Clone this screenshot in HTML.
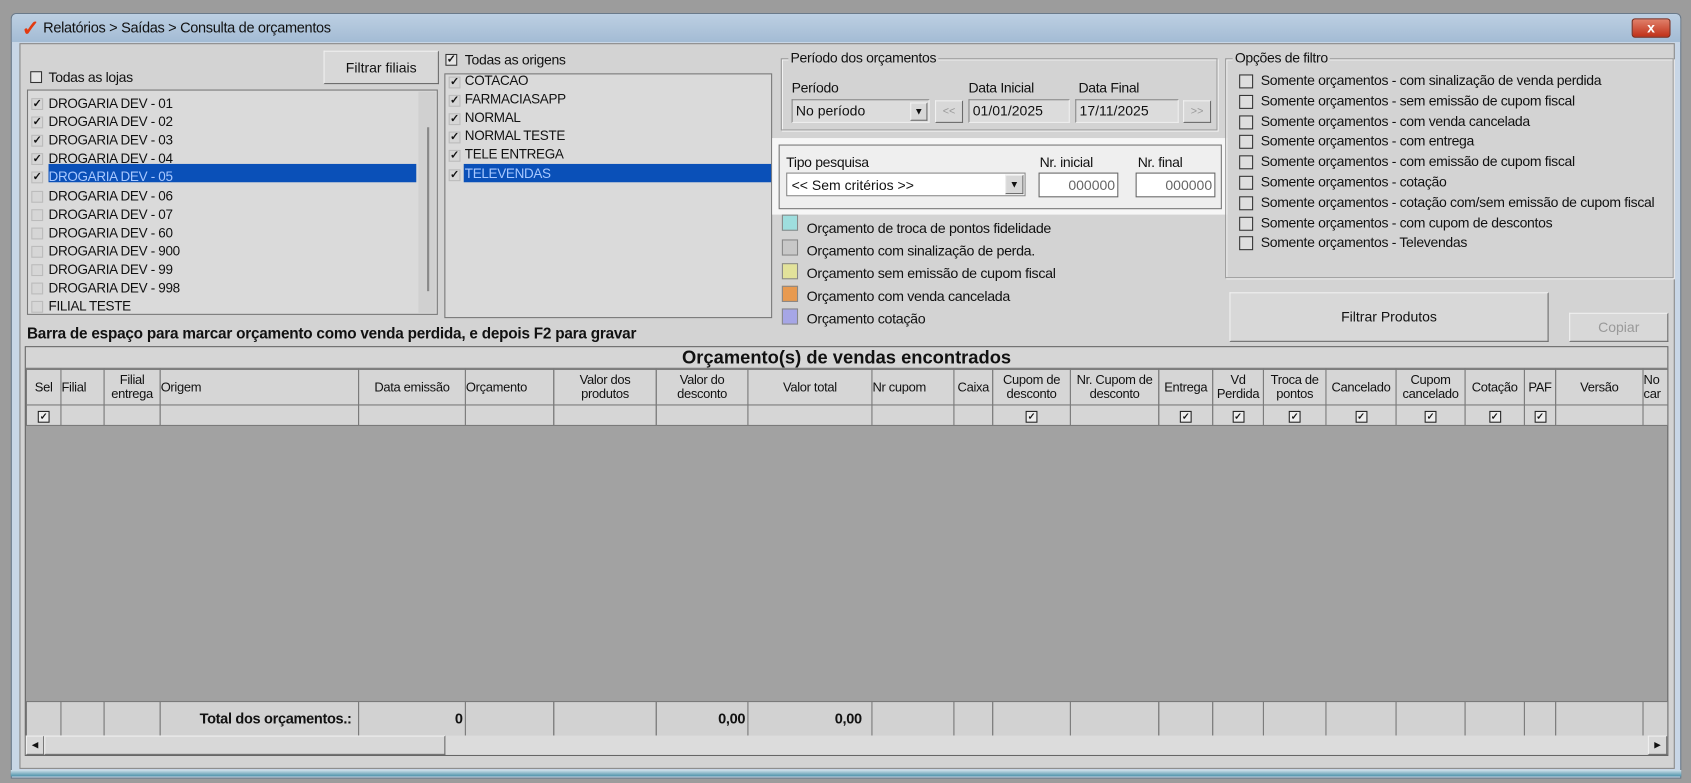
<!DOCTYPE html>
<html><head><meta charset="utf-8"><style>
*{box-sizing:border-box;margin:0;padding:0}
html,body{width:1691px;height:783px;overflow:hidden;background:#9c9c9c;font-family:"Liberation Sans",sans-serif;font-size:13px;color:#111}
#w{position:absolute;left:0;top:0;width:1568px;height:726px;transform:scale(1.07844);transform-origin:0 0}
.a{position:absolute}
.t{position:absolute;white-space:nowrap;letter-spacing:-0.3px}
.cb{position:absolute;width:11px;height:11px;border:1px solid #333;background:#e6e6e6;font-size:10px;line-height:9px;text-align:center;font-weight:bold}
.lc{position:absolute;width:11px;height:11px;border:1px solid #bbb;background:#d6d6d6;font-size:10px;line-height:9px;text-align:center;font-weight:bold;color:#111}
.grp{position:absolute;border:1px solid #9a9a9a;box-shadow:inset 1px 1px 0 #f4f4f4,1px 1px 0 #f4f4f4}
.btn{position:absolute;background:#d8d8d8;border:1px solid #f0f0f0;border-right-color:#6a6a6a;border-bottom-color:#6a6a6a;text-align:center}
.fld{position:absolute;background:#dcdcdc;border:1px solid #888;border-right-color:#eee;border-bottom-color:#eee;padding:2px 3px}
table{border-collapse:collapse;table-layout:fixed}
td{border:1px solid #7a7a7a;font-size:12px;text-align:center;letter-spacing:-0.3px;line-height:13px;overflow:hidden;white-space:nowrap}
.ck{display:inline-block;width:11px;height:11px;border:1px solid #222;background:#eee;font-size:9px;line-height:9px;font-weight:bold}
.lg{font-size:13.2px}
</style></head><body><div id="w">
<div class="a" style="left:10px;top:12px;width:1549px;height:710px;background:#c8d6e6;border:1px solid #6a7a8a;border-radius:5px 5px 0 0"></div>
<div class="a" style="left:11px;top:13px;width:1547px;height:26px;background:linear-gradient(#bccfe2,#a3bbd4);border-radius:5px 5px 0 0"></div>
<div class="t" style="left:20px;top:14px;color:#e23a10;font-size:20px;font-weight:bold">✓</div>
<div class="t" style="left:40px;top:18px;font-size:13.5px">Relatórios &gt; Saídas &gt; Consulta de orçamentos</div>
<div class="a" style="left:1513px;top:17px;width:36px;height:18px;background:linear-gradient(#e0806a,#c03018);border:1px solid #7a2a1a;border-radius:3px;color:#fff;font-weight:bold;text-align:center;line-height:15px">x</div>
<div class="a" style="left:18px;top:40px;width:1535px;height:673px;background:#d3d3d3;border:1px solid #888"></div>
<div class="a" style="left:10px;top:714px;width:1549px;height:6px;background:linear-gradient(#cfe0ea,#4a90a8)"></div>

<div class="cb" style="left:28px;top:66px"></div><div class="t" style="left:45px;top:64px">Todas as lojas</div>
<div class="btn" style="left:300px;top:47px;width:107px;height:31px;line-height:29px">Filtrar filiais</div>
<div class="a" style="left:25px;top:83px;width:381px;height:209px;background:#dadada;border:1px solid #777"></div>
<div class="a" style="left:388px;top:85px;width:16px;height:205px;background:#d0d0d0"></div>
<div class="a" style="left:396px;top:118px;width:2px;height:152px;background:#888"></div>
<div class="a" style="left:45px;top:152px;width:341px;height:17px;background:#0a50b8"></div>

<div class="cb" style="left:413px;top:50px">✓</div><div class="t" style="left:431px;top:48px">Todas as origens</div>
<div class="a" style="left:412px;top:68px;width:304px;height:227px;background:#dadada;border:1px solid #777"></div>
<div class="a" style="left:430px;top:152px;width:285px;height:17px;background:#0a50b8"></div>

<div class="grp" style="left:724px;top:54px;width:405px;height:67px"></div>
<div class="t" style="left:731px;top:46px;background:#d3d3d3;padding:0 2px">Período dos orçamentos</div>
<div class="t" style="left:734px;top:74px">Período</div>
<div class="t" style="left:898px;top:74px">Data Inicial</div>
<div class="t" style="left:1000px;top:74px">Data Final</div>
<div class="fld" style="left:734px;top:92px;width:128px;height:22px">No período</div>
<div class="btn" style="left:844px;top:95px;width:16px;height:17px;font-size:9px;line-height:15px">▼</div>
<div class="btn" style="left:867px;top:93px;width:26px;height:21px;color:#999;font-size:10px;line-height:19px">&lt;&lt;</div>
<div class="fld" style="left:898px;top:92px;width:94px;height:22px">01/01/2025</div>
<div class="fld" style="left:997px;top:92px;width:96px;height:22px">17/11/2025</div>
<div class="btn" style="left:1097px;top:93px;width:26px;height:21px;color:#999;font-size:10px;line-height:19px">&gt;&gt;</div>

<div class="a" style="left:716px;top:128px;width:422px;height:71px;background:#f6f6f6"></div>
<div class="a" style="left:722px;top:134px;width:411px;height:60px;background:#efefef;border:1px solid #777"></div>
<div class="t" style="left:729px;top:143px">Tipo pesquisa</div>
<div class="t" style="left:964px;top:143px">Nr. inicial</div>
<div class="t" style="left:1055px;top:143px">Nr. final</div>
<div class="a" style="left:729px;top:160px;width:222px;height:22px;background:#fff;border:1px solid #888;padding:3px 4px">&lt;&lt; Sem critérios &gt;&gt;</div>
<div class="btn" style="left:932px;top:162px;width:17px;height:18px;font-size:9px;line-height:16px">▼</div>
<div class="a" style="left:963px;top:160px;width:74px;height:23px;background:#fff;border:1px solid #666;text-align:right;padding:3px 2px;color:#666">000000</div>
<div class="a" style="left:1053px;top:160px;width:74px;height:23px;background:#fff;border:1px solid #666;text-align:right;padding:3px 2px;color:#666">000000</div>

<div class="a" style="left:725px;top:199px;width:15px;height:15px;background:#9edede;border:1px solid #888"></div><div class="t lg" style="left:748px;top:204px">Orçamento de troca de pontos fidelidade</div>
<div class="a" style="left:725px;top:222px;width:15px;height:15px;background:#c8c8c8;border:1px solid #888"></div><div class="t lg" style="left:748px;top:225px">Orçamento com sinalização de perda.</div>
<div class="a" style="left:725px;top:244px;width:15px;height:15px;background:#e2e29a;border:1px solid #888"></div><div class="t lg" style="left:748px;top:246px">Orçamento sem emissão de cupom fiscal</div>
<div class="a" style="left:725px;top:265px;width:15px;height:15px;background:#e89a50;border:1px solid #888"></div><div class="t lg" style="left:748px;top:267px">Orçamento com venda cancelada</div>
<div class="a" style="left:725px;top:286px;width:15px;height:15px;background:#a6a6e6;border:1px solid #888"></div><div class="t lg" style="left:748px;top:288px">Orçamento cotação</div>

<div class="grp" style="left:1136px;top:54px;width:416px;height:204px"></div>
<div class="t" style="left:1143px;top:46px;background:#d3d3d3;padding:0 2px">Opções de filtro</div>

<div class="btn" style="left:1140px;top:271px;width:296px;height:46px;line-height:44px">Filtrar Produtos</div>
<div class="btn" style="left:1455px;top:290px;width:92px;height:27px;line-height:25px;color:#999">Copiar</div>

<div class="t" style="left:25px;top:302px;font-weight:bold;font-size:14.2px;letter-spacing:-0.2px">Barra de espaço para marcar orçamento como venda perdida, e depois F2 para gravar</div>

<div class="a" style="left:23px;top:321px;width:1524px;height:380px;background:#a2a2a2;border:1px solid #666"></div>
<div class="a" style="left:24px;top:322px;width:1522px;height:20px;background:#d6d6d6;border-bottom:1px solid #777;text-align:center;font-weight:bold;font-size:17px;line-height:19px">Orçamento(s) de vendas encontrados</div>
<table class="a" style="left:24px;top:342px;width:1522px">
<colgroup><col style="width:32px"><col style="width:40px"><col style="width:52px"><col style="width:184px"><col style="width:99px"><col style="width:82px"><col style="width:95px"><col style="width:85px"><col style="width:115px"><col style="width:76px"><col style="width:36px"><col style="width:72px"><col style="width:82px"><col style="width:50px"><col style="width:47px"><col style="width:58px"><col style="width:65px"><col style="width:64px"><col style="width:55px"><col style="width:29px"><col style="width:81px"><col style="width:23px"></colgroup>
<tr style="height:33px;background:#d6d6d6"><td>Sel</td><td style="text-align:left">Filial</td><td>Filial<br>entrega</td><td style="text-align:left">Origem</td><td>Data emissão</td><td style="text-align:left">Orçamento</td><td>Valor dos<br>produtos</td><td>Valor do<br>desconto</td><td>Valor total</td><td style="text-align:left">Nr cupom</td><td>Caixa</td><td>Cupom de<br>desconto</td><td>Nr. Cupom de<br>desconto</td><td>Entrega</td><td>Vd<br>Perdida</td><td>Troca de<br>pontos</td><td>Cancelado</td><td>Cupom<br>cancelado</td><td>Cotação</td><td>PAF</td><td>Versão</td><td style="text-align:left">No<br>car</td></tr>
<tr style="height:19px;background:#d6d6d6"><td><span class="ck">✓</span></td><td></td><td></td><td></td><td></td><td></td><td></td><td></td><td></td><td></td><td></td><td><span class="ck">✓</span></td><td></td><td><span class="ck">✓</span></td><td><span class="ck">✓</span></td><td><span class="ck">✓</span></td><td><span class="ck">✓</span></td><td><span class="ck">✓</span></td><td><span class="ck">✓</span></td><td><span class="ck">✓</span></td><td></td><td></td></tr>
</table>
<table class="a" style="left:24px;top:650px;width:1522px">
<colgroup><col style="width:32px"><col style="width:40px"><col style="width:52px"><col style="width:184px"><col style="width:99px"><col style="width:82px"><col style="width:95px"><col style="width:85px"><col style="width:115px"><col style="width:76px"><col style="width:36px"><col style="width:72px"><col style="width:82px"><col style="width:50px"><col style="width:47px"><col style="width:58px"><col style="width:65px"><col style="width:64px"><col style="width:55px"><col style="width:29px"><col style="width:81px"><col style="width:23px"></colgroup>
<tr style="height:32px;background:#d2d2d2"><td></td><td></td><td></td><td style="text-align:right;font-weight:bold;font-size:13.5px;padding-right:6px">Total dos orçamentos.:</td><td style="text-align:right;font-weight:bold;font-size:13.5px;padding-right:2px">0</td><td></td><td></td><td style="text-align:right;font-weight:bold;font-size:13.5px;padding-right:2px">0,00</td><td style="text-align:left;font-weight:bold;font-size:13.5px;padding-left:80px">0,00</td><td></td><td></td><td></td><td></td><td></td><td></td><td></td><td></td><td></td><td></td><td></td><td></td><td></td></tr>
</table>
<div class="a" style="left:24px;top:682px;width:1522px;height:18px;background:#dcdcdc"></div>
<div class="btn" style="left:24px;top:682px;width:17px;height:18px;font-size:8px;line-height:16px">◀</div>
<div class="btn" style="left:41px;top:682px;width:372px;height:18px"></div>
<div class="btn" style="left:1528px;top:682px;width:18px;height:18px;font-size:8px;line-height:16px">▶</div>
<div id="lojas"></div>
<div id="opts"></div>
</div>
<script>
var L=["DROGARIA DEV - 01","DROGARIA DEV - 02","DROGARIA DEV - 03","DROGARIA DEV - 04","DROGARIA DEV - 05","DROGARIA DEV - 06","DROGARIA DEV - 07","DROGARIA DEV - 60","DROGARIA DEV - 900","DROGARIA DEV - 99","DROGARIA DEV - 998","FILIAL TESTE"],h="";
L.forEach(function(s,i){var y=89+i*17.1,c=i<5;h+='<div class="lc" style="left:29px;top:'+(y+2)+'px">'+(c?'✓':'')+'</div><div class="t" style="left:45px;top:'+y+'px;font-size:12.5px;'+(i==4?'color:#a8c8ff':'')+'">'+s+'</div>';});
var O=["COTACAO","FARMACIASAPP","NORMAL","NORMAL TESTE","TELE ENTREGA","TELEVENDAS"];
O.forEach(function(s,i){var y=67+i*17.1;h+='<div class="lc" style="left:416px;top:'+(y+4)+'px">✓</div><div class="t" style="left:431px;top:'+(y+1)+'px;font-size:12.5px;'+(i==5?'color:#a8c8ff':'')+'">'+s+'</div>';});
document.getElementById('lojas').innerHTML=h;h="";
var P=["com sinalização de venda perdida","sem emissão de cupom fiscal","com venda cancelada","com entrega","com emissão de cupom fiscal","cotação","cotação com/sem emissão de cupom fiscal","com cupom de descontos","Televendas"];
P.forEach(function(s,i){var y=69+i*18.8;h+='<div class="cb" style="left:1149px;top:'+y+'px;width:13px;height:13px;background:#dedede"></div><div class="t" style="left:1169px;top:'+(y-2)+'px;font-size:13px">Somente orçamentos - '+s+'</div>';});
document.getElementById('opts').innerHTML=h;
</script>
</body></html>
